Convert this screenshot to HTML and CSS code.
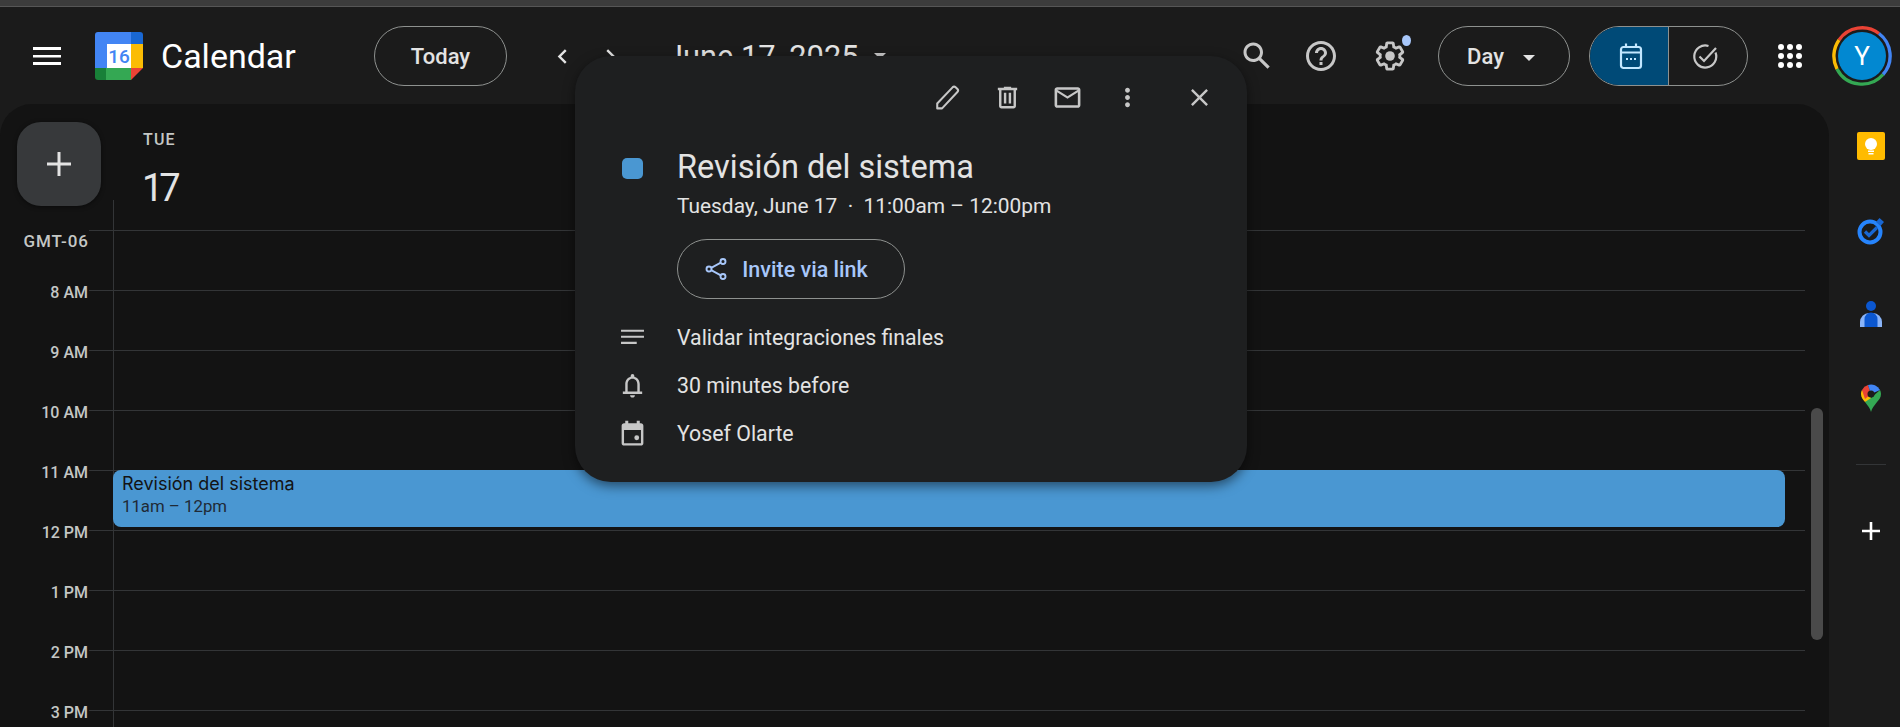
FILE: index.html
```html
<!DOCTYPE html>
<html lang="en">
<head>
    <meta charset="UTF-8">
    <title>Google Calendar - Day view</title>
    <link rel="stylesheet" href="styles.css">
</head>
<body>

<div class="app">
    <div class="window-strip"></div>

    <header class="topbar">
        <div class="brand">
            <button class="burger">
                <svg width="28" height="18" viewBox="0 0 28 18"><path d="M0 0h28v3H0zM0 8h28v2.6H0zM0 15h28v3H0z" fill="#fff"/></svg>
            </button>
            <svg class="logo" width="48" height="48" viewBox="0 0 48 48">
                <path d="M3 0h33v12H12v24H0V3a3 3 0 0 1 3-3z" fill="#4285f4"/>
                <path d="M36 0h9a3 3 0 0 1 3 3v9H36z" fill="#1967d2"/>
                <path d="M36 12h12v24H36z" fill="#fbbc04"/>
                <path d="M11 36h25v12H11z" fill="#34a853"/>
                <path d="M0 36h11v12H3a3 3 0 0 1-3-3z" fill="#188038"/>
                <path d="M36 36h12L36 48z" fill="#ea4335"/>
                <path d="M12 12h24v24H12z" fill="#fff"/>
                <text class="logo-day" x="24" y="31">16</text>
            </svg>
            <span class="brand-name">Calendar</span>
        </div>
        <button class="pill today">Today</button>
        <button class="nav-btn prev">
            <svg width="29" height="29" viewBox="0 0 24 24"><path d="M15.4 7.4 14 6l-6 6 6 6 1.4-1.4-4.6-4.6z" fill="#e3e3e3"/></svg>
        </button>
        <button class="nav-btn">
            <svg width="29" height="29" viewBox="0 0 24 24"><path d="M8.6 7.4 10 6l6 6-6 6-1.4-1.4 4.6-4.6z" fill="#e3e3e3"/></svg>
        </button>
        <div class="date-title">June 17, 2025 <span class="caret"></span></div>

        <div class="topbar-right">
            <button class="icon-btn">
                <svg width="36" height="36" viewBox="0 0 24 24"><path d="M20.49 19l-5.73-5.73C15.53 12.2 16 10.91 16 9.5 16 5.91 13.09 3 9.5 3S3 5.91 3 9.5 5.91 16 9.5 16c1.41 0 2.7-.47 3.77-1.24L19 20.49 20.49 19zM5 9.5C5 7.01 7.01 5 9.5 5S14 7.01 14 9.5 11.99 14 9.5 14 5 11.99 5 9.5z" fill="#c7c7c7"/></svg>
            </button>
            <button class="icon-btn">
                <svg width="36" height="36" viewBox="0 0 24 24"><path d="M11 18h2v-2h-2v2zm1-16C6.48 2 2 6.48 2 12s4.48 10 10 10 10-4.48 10-10S17.52 2 12 2zm0 18c-4.41 0-8-3.59-8-8s3.59-8 8-8 8 3.59 8 8-3.59 8-8 8zm0-14c-2.21 0-4 1.79-4 4h2c0-1.1.9-2 2-2s2 .9 2 2c0 2-3 1.75-3 5h2c0-2.25 3-2.5 3-5 0-2.21-1.79-4-4-4z" fill="#c7c7c7"/></svg>
            </button>
            <button class="icon-btn gear">
                <svg width="34" height="34" viewBox="0 0 24 24"><path d="M13.85 22.25h-3.7c-.74 0-1.36-.54-1.45-1.27l-.27-1.89c-.27-.14-.53-.29-.79-.46l-1.8.72c-.7.26-1.47-.03-1.81-.65L2.2 15.53c-.35-.66-.2-1.44.36-1.88l1.53-1.19c-.01-.15-.02-.3-.02-.46 0-.15.01-.31.02-.46l-1.52-1.19c-.59-.45-.74-1.26-.37-1.88l1.85-3.19c.34-.62 1.11-.9 1.79-.63l1.81.73c.26-.17.52-.32.78-.46l.27-1.91c.09-.7.71-1.25 1.44-1.25h3.7c.74 0 1.36.54 1.45 1.27l.27 1.89c.27.14.53.29.79.46l1.8-.72c.71-.26 1.48.03 1.82.65l1.84 3.18c.36.66.2 1.44-.36 1.88l-1.52 1.19c.01.15.02.3.02.46s-.01.31-.02.46l1.52 1.19c.56.45.72 1.23.37 1.86l-1.86 3.22c-.34.62-1.11.9-1.8.63l-1.8-.72c-.26.17-.52.32-.78.46l-.27 1.91c-.1.68-.72 1.22-1.46 1.22zm-3.23-2h2.76l.37-2.55.53-.22c.44-.18.88-.44 1.34-.78l.45-.34 2.38.96 1.38-2.4-2.03-1.58.07-.56c.03-.26.06-.51.06-.78s-.03-.53-.06-.78l-.07-.56 2.03-1.58-1.39-2.4-2.39.96-.45-.35c-.42-.32-.87-.58-1.33-.77l-.52-.22-.37-2.55h-2.76l-.37 2.55-.53.21c-.44.19-.88.44-1.34.79l-.45.33-2.38-.95-1.39 2.39 2.03 1.58-.07.56a7 7 0 0 0-.06.79c0 .26.02.53.06.78l.07.56-2.03 1.58 1.38 2.4 2.39-.96.45.35c.43.33.86.58 1.33.77l.53.22.38 2.55z" fill="#c7c7c7"/><circle cx="12" cy="12" r="3.4" fill="#c7c7c7"/></svg>
                <span class="gear-dot"></span>
            </button>
            <button class="pill view-select">Day <span class="caret small"></span></button>
            <div class="segment">
                <div class="segment-item active">
                    <svg width="28" height="28" viewBox="0 0 28 28" fill="none" stroke="#c2e7ff" stroke-width="2.2"><rect x="4" y="5" width="20" height="21" rx="2.5"/><path d="M4 10.5h20M9 1.5v4M19 1.5v4"/><path d="M9 17h2M13 17h2M17 17h2" stroke-width="1.8"/></svg>
                </div>
                <div class="segment-item tasks-item">
                    <svg width="28" height="28" viewBox="0 0 28 28" fill="none" stroke="#c7c7c7" stroke-width="2.2"><path d="M24.5 10.5A11 11 0 1 1 17.5 4"/><path d="M8.5 14.5l4.5 4.5L25 6"/></svg>
                </div>
            </div>
            <button class="apps">
                <svg width="24" height="24" viewBox="0 0 24 24" fill="#fff">
                    <circle cx="3" cy="3" r="3"/><circle cx="12" cy="3" r="3"/><circle cx="21" cy="3" r="3"/>
                    <circle cx="3" cy="12" r="3"/><circle cx="12" cy="12" r="3"/><circle cx="21" cy="12" r="3"/>
                    <circle cx="3" cy="21" r="3"/><circle cx="12" cy="21" r="3"/><circle cx="21" cy="21" r="3"/>
                </svg>
            </button>
            <div class="avatar-ring">
                <svg width="60" height="60" viewBox="0 0 60 60" fill="none" stroke-width="3.4">
                    <path d="M7 14A28 28 0 0 1 47 7.5" stroke="#ea4335"/>
                    <path d="M47 7.5A28 28 0 0 1 51 48.5" stroke="#4285f4"/>
                    <path d="M51 48.5A28 28 0 0 1 5 43" stroke="#34a853"/>
                    <path d="M5 43A28 28 0 0 1 7 14" stroke="#fbbc04"/>
                </svg>
                <span class="avatar">Y</span>
            </div>
        </div>
    </header>

    <div class="workspace">
        <main class="panel">
            <div class="day-head">
                <button class="create">
                    <svg width="36" height="36" viewBox="0 0 36 36"><path d="M16.5 6h3v10.5H30v3H19.5V30h-3V19.5H6v-3h10.5z" fill="#e3e3e3"/></svg>
                </button>
                <div class="day-label">
                    <div class="day-name">TUE</div>
                    <div class="day-num">17</div>
                </div>
            </div>

            <div class="hours">
                <div class="hour-row first"><span class="hour-label">GMT-06</span><span class="tick"></span><div class="slot"></div></div>
                <div class="hour-row"><span class="hour-label">8 AM</span><span class="tick"></span><div class="slot"></div></div>
                <div class="hour-row"><span class="hour-label">9 AM</span><span class="tick"></span><div class="slot"></div></div>
                <div class="hour-row"><span class="hour-label">10 AM</span><span class="tick"></span><div class="slot"></div></div>
                <div class="hour-row">
                    <span class="hour-label">11 AM</span><span class="tick"></span>
                    <div class="slot">
                        <div class="event">
                            <div class="event-title">Revisión del sistema</div>
                            <div class="event-time">11am – 12pm</div>
                        </div>
                    </div>
                </div>
                <div class="hour-row"><span class="hour-label">12 PM</span><span class="tick"></span><div class="slot"></div></div>
                <div class="hour-row"><span class="hour-label">1 PM</span><span class="tick"></span><div class="slot"></div></div>
                <div class="hour-row"><span class="hour-label">2 PM</span><span class="tick"></span><div class="slot"></div></div>
                <div class="hour-row"><span class="hour-label">3 PM</span><span class="tick"></span><div class="slot"></div></div>
            </div>
            <div class="scrollbar"></div>
        </main>

        <aside class="side-rail">
            <svg class="rail-keep" width="28" height="28" viewBox="0 0 28 28">
                <rect width="28" height="28" rx="2" fill="#ffbb00"/>
                <circle cx="14" cy="12" r="6" fill="#fff"/>
                <path d="M11 18.5h6V20h-6zM11.5 21h5v1.5h-5z" fill="#fff"/>
            </svg>
            <svg class="rail-tasks" width="28" height="28" viewBox="0 0 28 28" fill="none">
                <circle cx="13" cy="15" r="10.5" stroke="#2684fc" stroke-width="4"/>
                <path d="M8 14.5l4 4 8-8" stroke="#1967d2" stroke-width="3.2"/>
                <path d="M22.5 1l4.5 4-3.500 4-4.500-4z" fill="#1967d2"/>
            </svg>
            <svg class="rail-contacts" width="22" height="26" viewBox="0 0 22 26">
                <circle cx="11" cy="5" r="5" fill="#0b57d0"/>
                <path d="M0 26v-5a9 9 0 0 1 9-9h4a9 9 0 0 1 9 9v5z" fill="#8ab4f8"/>
                <path d="M4.5 26v-8a6.5 6.5 0 0 1 13 0v8z" fill="#0b57d0"/>
            </svg>
            <svg class="rail-maps" width="20" height="28" viewBox="0 0 20 28">
                <path d="M10 28c-1-4-3-6-6-10L10 10z" fill="#34a853"/>
                <path d="M10 28c1-4 3-6 6-10 2-2.5 4-4.5 4-8 0-1.5-.5-3-1-4L10 14z" fill="#34a853"/>
                <path d="M4 18C2 15.5 0 13.5 0 10c0-1.5.4-3 1-4l9 8z" fill="#fbbc04"/>
                <path d="M1 6a10 10 0 0 1 6-5l3 9-6 5z" fill="#ea4335"/>
                <path d="M7 1a10 10 0 0 1 12 5l-9 4z" fill="#4285f4"/>
                <circle cx="10" cy="10" r="3.5" fill="#1b1b1b"/>
            </svg>
            <div class="rail-divider"></div>
            <svg class="rail-add" width="18" height="18" viewBox="0 0 18 18"><path d="M7.7 0h2.6v7.7H18v2.6h-7.7V18H7.7v-7.7H0V7.7h7.7z" fill="#fff"/></svg>
        </aside>
    </div>

    <!-- event details popup -->
    <section class="popup">
        <div class="popup-tools">
            <button class="tool">
                <svg width="29" height="29" viewBox="0 0 24 24" fill="none" stroke="#c7c7c7" stroke-width="1.7" stroke-linejoin="round"><path d="M3.5 21v-4L16.2 3.6a1.8 1.8 0 0 1 2.5 0l1.5 1.4a1.800 1.800 0 0 1 0 2.500L7.500 21z"/></svg>
            </button>
            <button class="tool">
                <svg width="29" height="29" viewBox="0 0 24 24"><path d="M15 4V3H9v1H4v2h1v13c0 1.1.9 2 2 2h10c1.1 0 2-.9 2-2V6h1V4h-5zm2 15H7V6h10v13zM9 8h2v9H9zm4 0h2v9h-2z" fill="#c7c7c7"/></svg>
            </button>
            <button class="tool">
                <svg width="31" height="31" viewBox="0 0 24 24"><path d="M20 4H4c-1.1 0-2 .9-2 2v12c0 1.1.9 2 2 2h16c1.1 0 2-.9 2-2V6c0-1.1-.9-2-2-2zm0 14H4V8l8 5 8-5v10zm-8-7L4 6h16l-8 5z" fill="#c7c7c7"/></svg>
            </button>
            <button class="tool">
                <svg width="29" height="29" viewBox="0 0 24 24"><path d="M12 8c1.1 0 2-.9 2-2s-.9-2-2-2-2 .9-2 2 .9 2 2 2zm0 2c-1.1 0-2 .9-2 2s.9 2 2 2 2-.9 2-2-.9-2-2-2zm0 6c-1.1 0-2 .9-2 2s.9 2 2 2 2-.9 2-2-.9-2-2-2z" fill="#c7c7c7"/></svg>
            </button>
            <button class="tool close">
                <svg width="29" height="29" viewBox="0 0 24 24"><path d="M19 6.41L17.59 5 12 10.59 6.41 5 5 6.41 10.59 12 5 17.59 6.41 19 12 13.41 17.59 19 19 17.59 13.41 12z" fill="#c7c7c7"/></svg>
            </button>
        </div>

        <div class="popup-head">
            <div class="row-icon"><span class="color-chip"></span></div>
            <div>
                <h2 class="popup-title">Revisión del sistema</h2>
                <p class="popup-when">Tuesday, June 17 &nbsp;·&nbsp; 11:00am – 12:00pm</p>
            </div>
        </div>

        <button class="pill invite">
            <svg width="24" height="24" viewBox="0 0 24 24" fill="none" stroke="#a8c7fa" stroke-width="1.9"><circle cx="19" cy="4.5" r="2.5"/><circle cx="5" cy="12" r="2.5"/><circle cx="19" cy="19.5" r="2.5"/><path d="M7.2 10.8l9.6-5.1M7.2 13.2l9.6 5.1"/></svg>
            Invite via link
        </button>

        <div class="info-row">
            <div class="row-icon">
                <svg width="29" height="29" viewBox="0 0 24 24"><path d="M2.5 5.5h19v1.8h-19zM2.5 10.500h19v1.800h-19zM2.500 15.500h13v1.800h-13z" fill="#c7c7c7"/></svg>
            </div>
            <span>Validar integraciones finales</span>
        </div>
        <div class="info-row">
            <div class="row-icon">
                <svg width="29" height="29" viewBox="0 0 24 24"><path d="M12 22c1.1 0 2-.9 2-2h-4c0 1.1.9 2 2 2zM18 17v-6c0-3.07-1.64-5.64-4.5-6.32V4a1.5 1.5 0 0 0-3 0v.68C7.63 5.36 6 7.93 6 11v6H4v2h16v-2h-2zm-2 0H8v-6c0-2.48 1.51-4.5 4-4.5s4 2.02 4 4.5v6z" fill="#c7c7c7"/></svg>
            </div>
            <span>30 minutes before</span>
        </div>
        <div class="info-row">
            <div class="row-icon">
                <svg width="29" height="29" viewBox="0 0 24 24"><path d="M18 1.5v2h1c1.1 0 2 .9 2 2V20c0 1.1-.9 2-2 2H5c-1.1 0-2-.9-2-2V5.500c0-1.100.9-2 2-2h1v-2h2.500v2h7v-2zM19 9H5v11h14z" fill="#c7c7c7" fill-rule="evenodd"/><circle cx="15.5" cy="15.5" r="2" fill="#c7c7c7"/></svg>
            </div>
            <span>Yosef Olarte</span>
        </div>
    </section>
</div>

</body>
</html>
```

FILE: styles.css
```css
* {
    box-sizing: border-box;
}
body {
    margin: 0;
    background-color: #1b1b1b;
    font-family: Roboto, "Liberation Sans", sans-serif;
    color: #e3e3e3;
}
button {
    font-family: inherit;
    background: none;
    border: none;
    padding: 0;
    color: inherit;
}
svg {
    display: block;
}
.app {
    position: relative;
    height: 727px;
    overflow: hidden;
    display: flex;
    flex-direction: column;
}
.window-strip {
    height: 7px;
    background-color: #3c3c3c;
    border-bottom: 1px solid #565656;
}

/* top bar */
.topbar {
    height: 97px;
    flex: none;
    display: flex;
    align-items: flex-start;
    padding: 19px 8px 0 15px;
}
.brand {
    width: 359px;
    height: 60px;
    flex: none;
    display: flex;
    align-items: center;
}
.burger {
    width: 64px;
    display: flex;
    justify-content: center;
}
.logo {
    margin-left: 16px;
}
.logo-day {
    font-family: Roboto, sans-serif;
    font-size: 19px;
    font-weight: 500;
    fill: #4285f4;
    text-anchor: middle;
}
.brand-name {
    margin-left: 18px;
    font-size: 34px;
    color: #fff;
}
.pill {
    height: 60px;
    border: 1px solid #8e918f;
    border-radius: 30px;
    font-size: 22px;
    font-weight: 500;
    display: flex;
    align-items: center;
    justify-content: center;
}
.today {
    width: 133px;
}
.nav-btn {
    width: 48px;
    height: 60px;
    display: flex;
    align-items: center;
    justify-content: center;
}
.prev {
    margin-left: 31px;
}
.date-title {
    margin-left: 32px;
    height: 60px;
    display: flex;
    align-items: center;
    font-size: 30.8px;
}
.caret {
    display: inline-block;
    width: 0;
    height: 0;
    margin-left: 15px;
    border-left: 6px solid transparent;
    border-right: 6px solid transparent;
    border-top: 6px solid #c7c7c7;
}
.caret.small {
    margin-left: 19px;
    margin-top: 4px;
    border-top-color: #e3e3e3;
}
.topbar-right {
    margin-left: auto;
    display: flex;
    align-items: center;
}
.icon-btn {
    position: relative;
    width: 64px;
    height: 60px;
    display: flex;
    align-items: center;
    justify-content: center;
}
.gear {
    margin-left: 5px;
}
.gear-dot {
    position: absolute;
    top: 9px;
    left: 44px;
    width: 9px;
    height: 11px;
    border-radius: 50%;
    background-color: #a8c7fa;
}
.view-select {
    width: 132px;
    margin-left: 16px;
    padding-right: 6px;
}
.segment {
    width: 159px;
    height: 60px;
    margin-left: 19px;
    display: flex;
    border: 1px solid #8e918f;
    border-radius: 30px;
    overflow: hidden;
}
.segment-item {
    flex: 1;
    display: flex;
    align-items: center;
    justify-content: center;
}
.segment-item.active {
    background-color: #004a77;
    border-right: 1px solid #8e918f;
    padding-left: 5px;
}
.tasks-item {
    padding-right: 6px;
}
.apps {
    margin-left: 30px;
    margin-right: 30px;
}
.avatar-ring {
    position: relative;
    width: 60px;
    height: 60px;
    display: flex;
    align-items: center;
    justify-content: center;
}
.avatar-ring svg {
    position: absolute;
    top: 0;
    left: 0;
}
.avatar {
    width: 48px;
    height: 48px;
    border-radius: 50%;
    background-color: #0288d1;
    color: #fff;
    font-size: 26px;
    display: flex;
    align-items: center;
    justify-content: center;
}

/* calendar panel */
.workspace {
    flex: 1;
    display: flex;
    min-height: 0;
}
.panel {
    position: relative;
    width: 1829px;
    flex: none;
    background-color: #131313;
    border-radius: 32px 32px 0 0;
    overflow: hidden;
}
.day-head {
    position: relative;
    height: 126px;
    display: flex;
    padding: 18px 0 0 17px;
}
.day-head::after {
    content: "";
    position: absolute;
    left: 113px;
    top: 96px;
    height: 30px;
    width: 1px;
    background-color: #333537;
}
.create {
    width: 84px;
    height: 84px;
    border-radius: 24px;
    background-color: #37393b;
    box-shadow: 0 1px 4px rgba(0, 0, 0, 0.5);
    display: flex;
    align-items: center;
    justify-content: center;
}
.day-label {
    margin-left: 42px;
}
.day-name {
    margin-top: 8px;
    font-size: 16px;
    font-weight: 500;
    letter-spacing: 1.2px;
    color: #c4c7c5;
}
.day-num {
    margin: 17px 0 0 -1px;
    font-size: 38px;
    line-height: 44px;
    letter-spacing: -4px;
    color: #e3e3e3;
}
.hour-row {
    height: 60px;
    display: flex;
}
.hour-label {
    width: 89px;
    margin-top: -7px;
    padding-right: 1px;
    height: 20px;
    text-align: right;
    font-size: 16px;
    line-height: 20px;
    font-weight: 500;
    color: #c4c7c5;
}
.first .hour-label {
    margin-top: 1px;
    padding-right: 0;
    font-size: 17px;
    letter-spacing: 1px;
}
.tick {
    width: 24px;
    border-top: 1px solid #333537;
}
.slot {
    position: relative;
    width: 1692px;
    border-top: 1px solid #333537;
    border-left: 1px solid #333537;
}
.event {
    position: absolute;
    left: -1px;
    top: -1px;
    width: 1672px;
    height: 57px;
    padding: 2px 9px;
    border-radius: 8px;
    background-color: #4a97d2;
    color: #131314;
    line-height: 23px;
}
.event-title {
    font-family: Inter, Roboto, sans-serif;
    font-size: 18px;
}
.event-time {
    color: #1f2a36;
    font-size: 16.8px;
}
.scrollbar {
    position: absolute;
    right: 6px;
    top: 304px;
    width: 12px;
    height: 232px;
    border-radius: 6px;
    background-color: #4a4a4a;
}

/* right rail */
.side-rail {
    flex: 1;
    display: flex;
    flex-direction: column;
    align-items: center;
    padding-left: 12px;
}
.rail-keep {
    margin-top: 28px;
}
.rail-tasks {
    margin-top: 57px;
}
.rail-contacts {
    margin-top: 56px;
}
.rail-maps {
    margin-top: 57px;
}
.rail-divider {
    width: 30px;
    height: 1px;
    margin-top: 52px;
    background-color: #333537;
}
.rail-add {
    margin-top: 57px;
}

/* event popup */
.popup {
    position: absolute;
    left: 575px;
    top: 56px;
    width: 672px;
    height: 426px;
    border-radius: 36px;
    background-color: #1e1f20;
    box-shadow: 0 4px 12px rgba(0, 0, 0, 0.5);
    padding-left: 36px;
}
.popup-tools {
    display: flex;
    justify-content: flex-end;
    align-items: center;
    height: 72px;
    padding: 10px 18px 0 0;
}
.tool {
    width: 60px;
    display: flex;
    justify-content: center;
}
.close {
    margin-left: 12px;
}
.popup-head {
    display: flex;
    margin-top: 19px;
}
.row-icon {
    width: 66px;
    flex: none;
    display: flex;
    align-items: center;
}
.color-chip {
    width: 21px;
    height: 21px;
    margin: -31px 0 0 11px;
    border-radius: 5px;
    background-color: #4a97d2;
}
.popup-title {
    margin: 0;
    font-size: 32.5px;
    line-height: 40px;
    font-weight: 400;
}
.popup-when {
    margin: 5px 0 0;
    font-size: 20.9px;
    line-height: 28px;
    color: #e3e3e3;
}
.invite {
    width: 228px;
    height: 60px;
    margin: 19px 0 0 66px;
    gap: 14px;
    padding-right: 10px;
    font-size: 21.5px;
    color: #a8c7fa;
}
.info-row {
    display: flex;
    align-items: center;
    height: 48px;
    font-size: 21.3px;
    color: #e3e3e3;
}
.invite + .info-row {
    margin-top: 14px;
}
.info-row .row-icon svg {
    margin-left: 7px;
}
```
